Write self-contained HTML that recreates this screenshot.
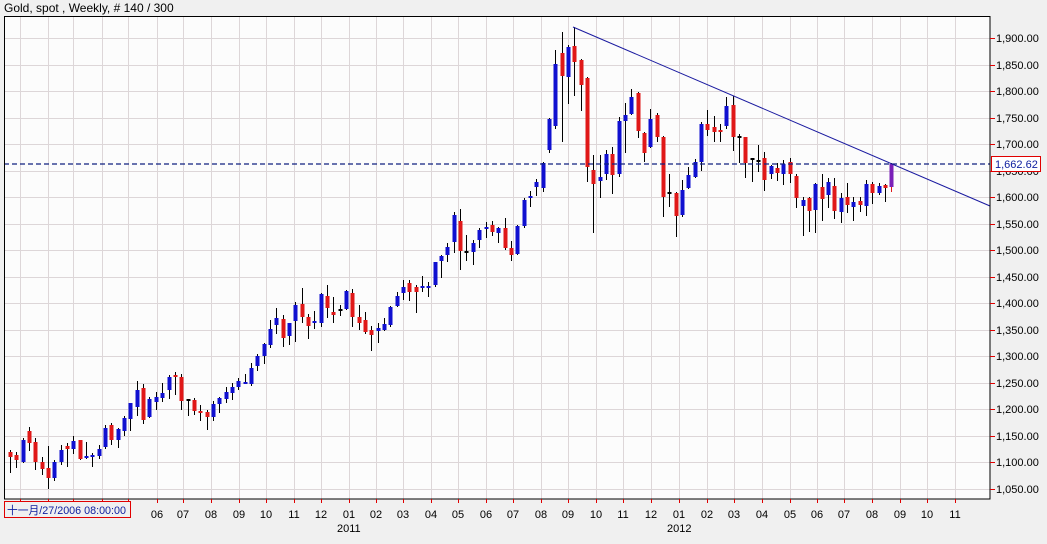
<!DOCTYPE html>
<html><head><meta charset="utf-8">
<style>
html,body{margin:0;padding:0;background:#f0f0f0;}
body{width:1047px;height:544px;overflow:hidden;position:relative;font-family:"Liberation Sans","Noto Sans CJK SC",sans-serif;}
svg{position:absolute;left:0;top:0;}
text{font-family:"Liberation Sans","Noto Sans CJK SC",sans-serif;font-size:11px;fill:#000;}
</style></head>
<body>
<svg id="c" width="1047" height="544" xmlns="http://www.w3.org/2000/svg">
<text x="4" y="12" style="font-size:12px" fill="#000">Gold, spot , Weekly, # 140 / 300</text>
<rect x="4.5" y="16.5" width="985.5" height="482.5" fill="#fcfcfc" stroke="none"/>
<g id="grid" stroke="#ddd6d8" stroke-width="1"></g>
<g id="candles"></g>
<line x1="4" y1="164" x2="990" y2="164" stroke="#102080" stroke-width="1.3" stroke-dasharray="5,3"/>
<line x1="573" y1="27" x2="990" y2="206" stroke="#1a1aa0" stroke-width="1"/>
<rect x="4.5" y="16.5" width="985.5" height="482.5" fill="none" stroke="#000" stroke-width="1"/>
<g id="axis"></g>
<rect x="991.5" y="156.5" width="49" height="15" fill="#fff" stroke="#e00000" stroke-width="1"/>
<text x="995" y="168" style="fill:#1020a0">1,662.62</text>
<rect x="4.5" y="501.5" width="126" height="16" fill="#f0f0f0" stroke="#e00000" stroke-width="1"/>
<text x="7" y="514" textLength="119" lengthAdjust="spacingAndGlyphs" style="fill:#1020a0;font-size:11px">十一月/27/2006 08:00:00</text>
<text x="337" y="532">2011</text>
<text x="667" y="532">2012</text>
</svg>
<script>
var ns="http://www.w3.org/2000/svg";
function el(p,n,a){var e=document.createElementNS(ns,n);for(var k in a)e.setAttribute(k,a[k]);p.appendChild(e);return e;}
var grid=document.getElementById('grid'),axis=document.getElementById('axis'),cg=document.getElementById('candles');
var mx=[20,48,73,102,128,157,183,211,239,266,294,321,349,376,403,431,458,486,513,541,568,596,623,651,679,707,734,762,790,817,844,872,900,927,955];
mx.forEach(function(x,i){
 el(grid,'line',{x1:x+.5,y1:17,x2:x+.5,y2:499});
 el(axis,'line',{x1:x+.5,y1:499,x2:x+.5,y2:503,stroke:'#e00000'});
 if(i>4){var m=(i%12)+1;var t=el(axis,'text',{x:x,y:518,'text-anchor':'middle'});t.textContent=(m<10?'0':'')+m;}
});
for(var k=0;k<18;k++){
 var y=38+k*26.5;var v=1900-k*50;
 el(grid,'line',{x1:5,y1:Math.round(y)+.5,x2:990,y2:Math.round(y)+.5});
 el(axis,'line',{x1:990,y1:Math.round(y)+.5,x2:995,y2:Math.round(y)+.5,stroke:'#e00000'});
 var t=el(axis,'text',{x:996,y:Math.round(y)+4});t.textContent=(v>=1000?'1,'+String(v-1000).padStart(3,'0'):v)+'.00';
}
var D=[
[452,457,450,473,'r'],[455,460,452,468,'r'],[440,462,438,463,'b'],[431,443,427,451,'r'],[442,462,438,470,'r'],
[462,469,457,475,'r'],[468,478,446,489,'r'],[462,478,460,481,'b'],[450,462,445,465,'b'],[446,449,443,467,'r'],
[441,449,436,454,'b'],[440,459,440,460,'r'],[457,457,442,459,'b'],[456,456,453,467,'b'],[449,456,445,459,'b'],
[428,447,425,449,'b'],[425,440,423,445,'r'],[429,440,428,448,'b'],[418,431,416,436,'b'],[403,419,403,431,'b'],
[390,407,381,416,'b'],[388,420,384,424,'r'],[399,417,397,418,'b'],[397,402,392,410,'b'],[393,398,383,402,'b'],
[377,390,375,399,'b'],[375,377,372,395,'r'],[377,401,374,410,'r'],[400,400,399,416,'k'],[400,411,398,415,'r'],
[411,413,405,421,'r'],[412,417,410,430,'r'],[404,417,401,421,'b'],[398,404,397,413,'b'],[392,399,387,403,'b'],
[387,393,383,400,'b'],[381,387,378,390,'b'],[383,383,374,384,'b'],[368,384,363,386,'b'],[356,366,354,371,'b'],
[344,356,343,364,'b'],[329,345,320,348,'b'],[318,325,308,334,'b'],[319,338,315,347,'r'],[323,336,323,345,'b'],
[305,321,302,342,'b'],[304,317,288,323,'r'],[317,326,314,339,'r'],[322,322,311,329,'b'],[294,323,293,327,'b'],
[296,308,285,318,'r'],[312,315,297,323,'r'],[310,310,305,316,'k'],[291,309,290,310,'b'],[293,317,289,327,'r'],
[317,323,305,330,'r'],[320,332,312,334,'r'],[330,335,326,351,'r'],[328,331,323,343,'b'],[324,330,318,331,'b'],
[307,325,306,327,'b'],[296,306,292,307,'b'],[287,293,280,300,'b'],[283,292,280,301,'r'],[287,292,285,313,'r'],
[286,288,276,292,'b'],[286,288,282,297,'b'],[262,285,262,287,'b'],[256,261,255,278,'b'],[247,255,243,262,'b'],
[215,242,212,253,'b'],[221,251,209,270,'r'],[252,252,235,261,'k'],[243,252,240,265,'b'],[230,240,228,248,'b'],
[227,229,222,238,'b'],[225,232,221,236,'r'],[228,233,227,243,'b'],[228,248,218,250,'r'],[248,255,241,261,'r'],
[226,254,225,255,'b'],[200,226,198,228,'b'],[196,197,191,207,'b'],[182,187,179,196,'b'],[163,188,162,192,'b'],
[119,150,118,153,'b'],[64,126,50,129,'b'],[53,76,32,142,'r'],[47,77,45,104,'b'],[46,62,27,96,'r'],
[60,85,59,111,'r'],[78,167,77,182,'r'],[170,184,155,233,'r'],[177,181,155,198,'b'],[154,174,150,180,'b'],
[154,175,147,194,'r'],[121,174,117,177,'b'],[115,121,103,153,'b'],[97,114,89,115,'b'],[93,131,92,138,'r'],
[133,153,132,162,'r'],[119,147,109,148,'b'],[115,137,113,142,'r'],[137,197,136,217,'r'],[193,193,174,207,'k'],
[193,216,192,237,'r'],[190,215,180,217,'b'],[175,188,167,189,'b'],[162,177,159,178,'b'],[124,162,122,171,'b'],
[124,130,110,136,'r'],[127,132,116,142,'r'],[130,131,124,142,'r'],[106,126,97,129,'b'],[105,137,96,151,'r'],
[137,137,134,163,'k'],[137,163,137,178,'r'],[159,159,159,182,'k'],[161,161,145,172,'k'],[158,180,152,191,'r'],
[166,174,165,179,'b'],[168,173,163,181,'r'],[164,174,160,185,'b'],[162,174,158,183,'r'],[176,198,174,208,'r'],
[200,206,197,236,'b'],[198,211,197,232,'r'],[184,210,183,233,'b'],[187,199,174,221,'r'],[182,195,178,208,'b'],
[186,211,178,219,'r'],[198,212,193,223,'b'],[197,205,183,213,'r'],[202,207,197,221,'b'],[201,205,197,212,'r'],
[184,206,180,216,'b'],[184,193,182,204,'r'],[186,193,183,195,'b'],[185,188,184,202,'r'],[164,187,163,192,'p']];
var col={r:'#e01818',b:'#1010d0',k:'#000',p:'#7a20b8'};
D.forEach(function(d,i){
 var x=Math.round(10+i*6.34);
 el(cg,'line',{x1:x+.5,y1:d[2],x2:x+.5,y2:d[3],stroke:'#000','stroke-width':1});
 if(d[4]=='p'){el(cg,'line',{x1:x+.5,y1:d[1],x2:x+.5,y2:d[3],stroke:'#e01818','stroke-width':1});}
 var h=Math.max(d[1]-d[0],2);
 el(cg,'rect',{x:x-1.5,y:d[0]-(d[1]==d[0]?1:0),width:4,height:h,fill:col[d[4]]});
});
</script>
</body></html>
